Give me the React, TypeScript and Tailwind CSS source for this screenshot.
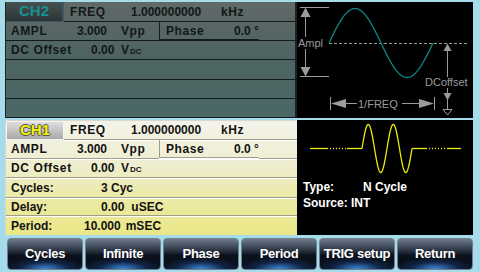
import React from 'react';

// sine points in absolute screen coords (the svg viewBoxes match the page)
function sinePoints(x0: number, x1: number, cy: number, amp: number, cycles: number) {
  const pts: string[] = [];
  const n = 120;
  for (let i = 0; i <= n; i++) {
    const x = x0 + ((x1 - x0) * i) / n;
    const y = cy - amp * Math.sin((2 * Math.PI * cycles * i) / n);
    pts.push(`${x.toFixed(2)},${y.toFixed(2)}`);
  }
  return pts.join(' ');
}

function FreqCells() {
  return (
    <>
      <span className="w-[67px] pl-[6px] tracking-[0.6px]">FREQ</span>
      <span className="w-[90px]">1.000000000</span>
      <span className="tracking-[0.6px]">kHz</span>
    </>
  );
}

function AmplRow({ line }: { line: string }) {
  return (
    <div className={`flex h-[19px] items-center pl-[5px] ${line}`}>
      <span className="w-[66px] tracking-[0.6px]">AMPL</span>
      <span className="w-[44px]">3.000</span>
      <span className="w-[38px] tracking-[0.6px]">Vpp</span>
      <span className={`flex h-full items-center border-l pl-[6px] ${line}`}>
        <span className="w-[68px] tracking-[0.6px]">Phase</span>
        <span>0.0 °</span>
      </span>
    </div>
  );
}

function DcRow({ line }: { line: string }) {
  return (
    <div className={`flex h-[19px] items-center pl-[5px] ${line}`}>
      <span className="w-[80px] tracking-[0.6px]">DC Offset</span>
      <span className="w-[30px]">0.00</span>
      <span>
        V<span className="ml-[1px] text-[8px]">DC</span>
      </span>
    </div>
  );
}

function TopPanel() {
  const line = 'border-b border-[#141b1b]';
  return (
    <div className="flex h-[116px] w-[292px] flex-col border-l border-r-2 border-[#1b2323] bg-[linear-gradient(#616868,#4d6462_45%,#4b6866)] text-[12px] font-bold text-[#111818]">
      <div className="flex h-[20px]">
        <div className="flex w-[58px] items-center justify-center border-r-2 border-b border-[#3c5866] bg-[linear-gradient(#475050,#2b3535)] text-[15px] text-[#1a8f8f]">
          CH2
        </div>
        <div className={`flex flex-1 items-center ${line}`}>
          <FreqCells />
        </div>
      </div>
      <AmplRow line={line} />
      <DcRow line={line} />
      <div className={`h-[20px] ${line}`} />
      <div className={`h-[19px] ${line}`} />
      <div className={`flex-1 ${line}`} />
    </div>
  );
}

function BottomPanel() {
  const line = 'border-b border-[#9d9d8a] shadow-[0_1px_0_#ffffff]';
  return (
    <div className="flex h-[115px] w-[292px] flex-col border-l border-t border-[#d8d8d0] bg-[linear-gradient(#f3f3ea,#efeed2_35%,#ece9a4_70%,#ebe787)] text-[12px] font-bold text-[#121212]">
      <div className="flex h-[19px]">
        <div className="flex w-[58px] items-center justify-center border border-[#f4f4f4] bg-[linear-gradient(#dedede,#a9a9a9)] text-[15px] text-[#f4f400] [text-shadow:1px_0_0_#555,-1px_0_0_#555,0_1px_0_#555,0_-1px_0_#555]">
          CH1
        </div>
        <div className={`flex flex-1 items-center ${line}`}>
          <FreqCells />
        </div>
      </div>
      <AmplRow line={line} />
      <DcRow line={line} />
      <div className={`flex h-[20px] items-center pl-[5px] ${line}`}>
        <span className="w-[90px]">Cycles:</span>
        <span>3 Cyc</span>
      </div>
      <div className={`flex h-[18px] items-center pl-[5px] ${line}`}>
        <span className="w-[90px]">Delay:</span>
        <span>0.00</span>
        <span className="ml-[7px]">uSEC</span>
      </div>
      <div className="flex flex-1 items-center pl-[5px]">
        <span className="w-[73px]">Period:</span>
        <span>10.000</span>
        <span className="ml-[5px]">mSEC</span>
      </div>
    </div>
  );
}

function SineDiagram() {
  const g = '#9b9b9b';
  return (
    <div className="h-[116px] w-[176px] bg-black">
      <svg width="176" height="116" viewBox="297 2 176 116" className="block">
        <g stroke={g} strokeWidth="1" fill="none">
          <line x1="300" y1="7.5" x2="329" y2="7.5" />
          <line x1="300" y1="76.5" x2="329" y2="76.5" />
          <line x1="305.5" y1="16" x2="305.5" y2="37" />
          <line x1="305.5" y1="49" x2="305.5" y2="68" />
          <line x1="329" y1="43.5" x2="469" y2="43.5" strokeDasharray="3 2" />
          <line x1="447.5" y1="50" x2="447.5" y2="77" />
          <line x1="447.5" y1="88" x2="447.5" y2="94" />
          <line x1="447.5" y1="100" x2="447.5" y2="109" />
          <polygon points="443,109.5 452,109.5 447.5,115" />
          <line x1="330.5" y1="97" x2="330.5" y2="110" />
          <line x1="434.5" y1="97" x2="434.5" y2="110" />
          <line x1="345" y1="103.5" x2="357" y2="103.5" />
          <line x1="402" y1="103.5" x2="419" y2="103.5" />
        </g>
        <g fill={g}>
          <polygon points="305.5,7.5 300.5,17 310.5,17" />
          <polygon points="305.5,76.5 300.5,67 310.5,67" />
          <polygon points="447.5,43.5 443.5,51 451.5,51" />
          <polygon points="447.5,100.5 443.5,93 451.5,93" />
          <polygon points="331,103.5 346,99 346,108" />
          <polygon points="434,103.5 419,99 419,108" />
        </g>
        <polyline points={sinePoints(329, 433, 43, 34.5, 1)} fill="none" stroke="#118585" strokeWidth="1.3" />
        <g fill={g} fontSize="11" fontFamily="'Liberation Sans', Arial, sans-serif">
          <text x="298" y="47">Ampl</text>
          <text x="425" y="86">DCoffset</text>
          <text x="358" y="107.5">1/FREQ</text>
        </g>
      </svg>
    </div>
  );
}

function BurstView() {
  const y = '#ecec10';
  return (
    <div className="flex h-[115px] w-[176px] flex-col bg-black">
      <svg width="176" height="58" viewBox="297 120 176 58" className="block">
        <g stroke={y} strokeWidth="1.3" fill="none">
          <line x1="310" y1="148.5" x2="328" y2="148.5" />
          <line x1="330" y1="148.5" x2="346" y2="148.5" strokeDasharray="1 2" />
          <line x1="347" y1="148.5" x2="362" y2="148.5" />
          <polyline points={sinePoints(362, 412, 148.5, 24, 2)} />
          <line x1="412" y1="148.5" x2="427" y2="148.5" />
          <line x1="429" y1="148.5" x2="446" y2="148.5" strokeDasharray="1 2" />
          <line x1="447" y1="148.5" x2="461" y2="148.5" />
        </g>
      </svg>
      <div className="pl-[6px] pt-[1px] text-[12px] font-bold leading-[16px] text-white">
        <div className="flex">
          <span className="w-[60px]">Type:</span>
          <span>N Cycle</span>
        </div>
        <div>Source: INT</div>
      </div>
    </div>
  );
}

const buttons = ['Cycles', 'Infinite', 'Phase', 'Period', 'TRIG setup', 'Return'];

function SoftKey({ label }: { label: string }) {
  return (
    <button className="flex h-[32px] w-[76px] items-center justify-center rounded-[4px] border border-[#707d8b] bg-[radial-gradient(ellipse_55%_40%_at_50%_100%,rgba(70,150,240,0.9),rgba(30,80,160,0.3)_60%,transparent),linear-gradient(#6f7c8c,#303a48_35%,#0b111b_55%,#08101e)] text-[13px] font-bold tracking-[-0.3px] text-white">
      {label}
    </button>
  );
}

export default function App() {
  return (
    <div className="h-[272px] w-[480px] overflow-hidden bg-[#a6dbeb] pt-[2px] font-['Liberation_Sans',Arial,sans-serif]">
      <div className="ml-[5px] flex">
        <TopPanel />
        <SineDiagram />
      </div>
      <div className="ml-[5px] mt-[2px] flex">
        <BottomPanel />
        <BurstView />
      </div>
      <div className="ml-[7px] mt-[3px] flex gap-[2px]">
        {buttons.map((b) => (
          <SoftKey key={b} label={b} />
        ))}
      </div>
    </div>
  );
}
